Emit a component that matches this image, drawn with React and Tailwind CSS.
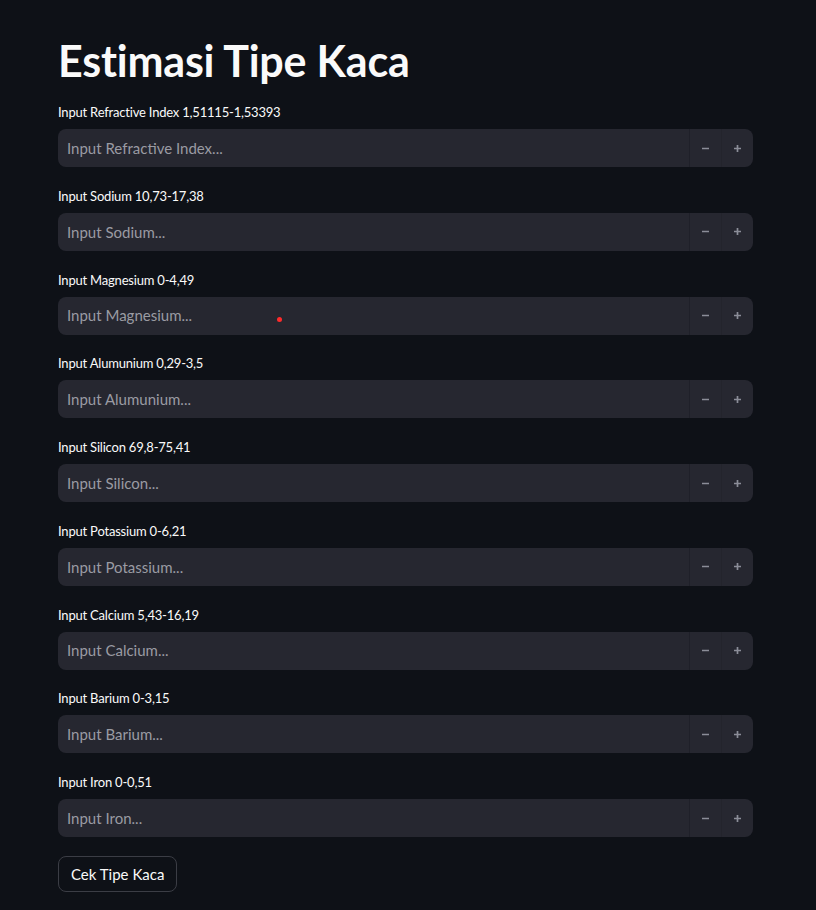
import { useState } from "react";

const fields = [
  { label: "Input Refractive Index 1,51115-1,53393", placeholder: "Input Refractive Index..." },
  { label: "Input Sodium 10,73-17,38", placeholder: "Input Sodium..." },
  { label: "Input Magnesium 0-4,49", placeholder: "Input Magnesium..." },
  { label: "Input Alumunium 0,29-3,5", placeholder: "Input Alumunium..." },
  { label: "Input Silicon 69,8-75,41", placeholder: "Input Silicon..." },
  { label: "Input Potassium 0-6,21", placeholder: "Input Potassium..." },
  { label: "Input Calcium 5,43-16,19", placeholder: "Input Calcium..." },
  { label: "Input Barium 0-3,15", placeholder: "Input Barium..." },
  { label: "Input Iron 0-0,51", placeholder: "Input Iron..." },
];

function NumberField({ label, placeholder, dot }) {
  const [value, setValue] = useState("");

  return (
    <div className="flex flex-col">
      <label className="text-[13px] tracking-[-0.2px] leading-[21px] text-[#fafafa] mb-[6px]">{label}</label>
      <div className="relative flex h-[38px] rounded-[8px] bg-[#262730] overflow-hidden">
        <input
          type="text"
          value={value}
          placeholder={placeholder}
          onChange={(e) => setValue(e.target.value)}
          className="flex-1 bg-transparent px-[9px] text-[15px] text-[#fafafa] placeholder:text-[#9a9ba3] outline-none"
        />
        {dot && <span className="absolute left-[219px] top-[20px] w-[5px] h-[5px] rounded-full bg-[#ff2b2b]" />}
        <button className="w-[32px] flex items-center justify-center border-l border-[#1f2029]">
          <svg width="9" height="9" viewBox="0 0 9 9">
            <path d="M1 4.5h7" stroke="#8b8d98" strokeWidth="1.7" />
          </svg>
        </button>
        <button className="w-[32px] flex items-center justify-center border-l border-[#23242c]">
          <svg width="9" height="9" viewBox="0 0 9 9">
            <path d="M1 4.5h7M4.5 1v7" stroke="#8b8d98" strokeWidth="1.7" />
          </svg>
        </button>
      </div>
    </div>
  );
}

export default function App() {
  return (
    <div
      className="min-h-screen bg-[#0e1117] text-[#fafafa]"
      style={{ fontFamily: "'Lato', 'Noto Sans', sans-serif" }}
    >
      <div className="w-[695px] ml-[58px] pt-[34px] pb-[19px]">
        <h1 className="text-[43px] leading-[53px] font-bold tracking-[-0.2px] mb-[15px]">
          Estimasi Tipe Kaca
        </h1>

        <div className="flex flex-col gap-[18.75px]">
          {fields.map((f, i) => (
            <NumberField key={f.label} label={f.label} placeholder={f.placeholder} dot={i === 2} />
          ))}

          <div>
            <button className="h-[36px] px-[12px] rounded-[8px] border border-[#3b3d45] text-[15px] text-[#fafafa] bg-transparent">
              Cek Tipe Kaca
            </button>
          </div>
        </div>
      </div>
    </div>
  );
}
